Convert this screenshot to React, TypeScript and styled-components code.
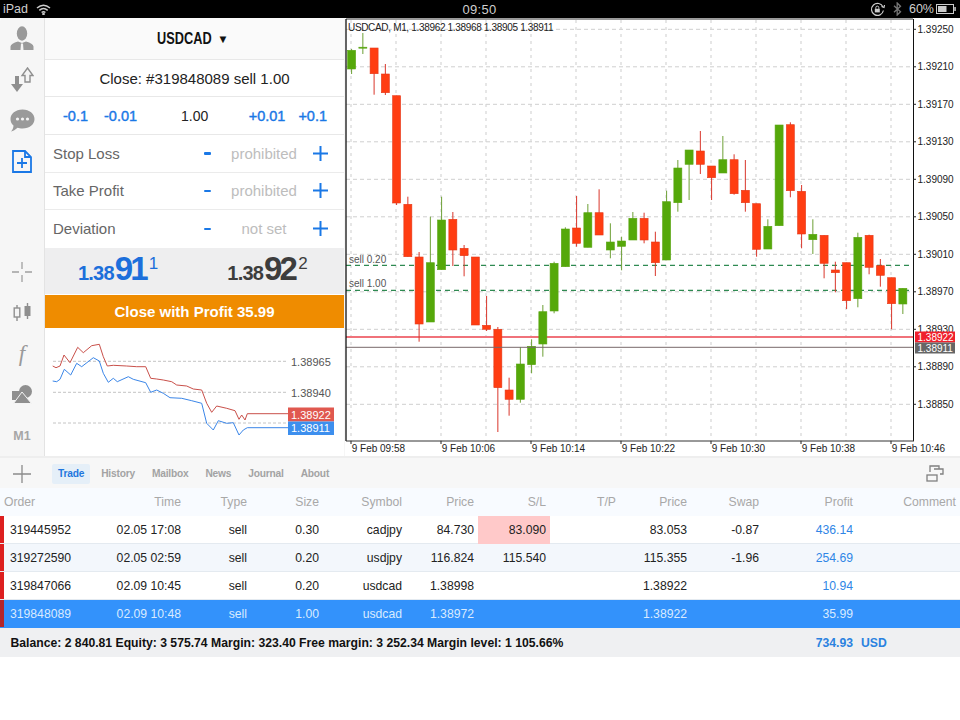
import React from 'react';
import styled, { createGlobalStyle } from 'styled-components';

const GlobalStyle = createGlobalStyle`
  html, body {
    margin: 0;
    padding: 0;
    background: #fff;
    font-family: "Liberation Sans", Arial, sans-serif;
  }
  * { box-sizing: border-box; }
`;

// [wickTop, bodyTop, bodyBottom, wickBottom, up]
const candles: [number, number, number, number, boolean][] = [
  [49, 50.3, 69, 74, true], [33, 47.2, 48.2, 54, true], [48, 48, 73.7, 94.7, false], [64, 74, 92.7, 95, false],
  [95.7, 95.7, 203, 205, false], [196.7, 204.3, 256.7, 256.7, false], [252, 257, 324, 341.7, false], [216.7, 262.7, 322, 322, true],
  [196.7, 220, 269.7, 269.7, true], [212, 219.3, 250, 266, false], [245, 248.3, 255.7, 276.3, false], [257, 257, 325, 325, false],
  [296, 325.3, 329.3, 331, false], [327, 329.3, 387.7, 432, false], [377.7, 390, 399.3, 415.7, false], [347, 364, 399.3, 402.7, true],
  [339.3, 346.3, 364.7, 373.3, true], [305, 311.7, 344, 356.7, true], [261.7, 263.3, 311, 313.3, true], [227.3, 229, 266.7, 266.7, true],
  [196, 228, 243.3, 246.7, false], [204, 212.7, 247.3, 247.3, true], [189.3, 212.7, 235, 235, false], [223.3, 242, 250, 258.3, true],
  [236.7, 241, 246.3, 270.3, true], [212, 218.3, 240, 240, true], [212.7, 218.3, 240, 243.3, false], [231.7, 242, 262.7, 276, false],
  [190.7, 201.7, 260, 260, true], [160, 168, 202.7, 211.7, true], [150, 150, 164.3, 200, true], [131, 151, 164.3, 174, false],
  [166, 166, 177.7, 200, false], [136, 159.7, 173, 173, true], [154.3, 159.7, 193.7, 194.7, false], [160, 190.3, 202.7, 211.7, false],
  [203.7, 203.7, 249.3, 256.7, false], [219.3, 226.3, 249, 249, true], [125, 125, 225.7, 225.7, true], [122.3, 124.7, 190.7, 197.3, false],
  [185, 191.3, 234, 248.3, false], [219.3, 234.3, 239.7, 254, true], [235.3, 235.3, 263.3, 278.3, false], [261.7, 270, 272.7, 292.3, false],
  [262.7, 262.7, 300.7, 309, false], [232.7, 237.3, 298.7, 307.3, true], [234.7, 235.3, 267.3, 274.3, false], [259, 265.7, 275.3, 286.7, false],
  [277.7, 277.7, 303.7, 329.3, false], [288.3, 288.3, 304, 314, true],
];

const priceLabels = ['1.39250', '1.39210', '1.39170', '1.39130', '1.39090', '1.39050', '1.39010', '1.38970', '1.38930', '1.38890', '1.38850'];
const timeLabels = ['9 Feb 09:58', '9 Feb 10:06', '9 Feb 10:14', '9 Feb 10:22', '9 Feb 10:30', '9 Feb 10:38', '9 Feb 10:46'];

const askLine = [[158,408],[168,413],[180,408],[192,375],[210,398],[233,352],[250,368],[275,347],[298,343],[310,380],[322,408],[340,406],[380,408],[410,410],[437,410],[452,445],[470,447],[490,450],[515,455],[530,465],[560,468],[580,477],[605,480],[620,520],[635,547],[650,528],[680,535],[705,542],[717,568],[725,555],[735,570],[742,551],[865,551]];
const bidLine = [[158,453],[170,455],[180,448],[193,418],[212,435],[230,400],[245,410],[280,383],[298,393],[310,430],[325,457],[340,445],[352,455],[385,440],[400,448],[437,458],[452,487],[470,480],[490,490],[510,503],[545,505],[575,512],[605,520],[620,580],[640,600],[655,572],[680,580],[700,578],[717,615],[730,600],[742,593],[865,593]];
const toPoints = (line: number[][]) => line.map(([x, y]) => `${(x / 3).toFixed(1)},${(230 + y / 3).toFixed(1)}`).join(' ');

const columns = [
  { name: 'Order', left: true }, { name: 'Time' }, { name: 'Type' }, { name: 'Size' }, { name: 'Symbol' }, { name: 'Price' },
  { name: 'S/L' }, { name: 'T/P' }, { name: 'Price' }, { name: 'Swap' }, { name: 'Profit' }, { name: 'Comment' },
];

const orders = [
  ['319445952', '02.05 17:08', 'sell', '0.30', 'cadjpy', '84.730', '83.090', '', '83.053', '-0.87', '436.14', ''],
  ['319272590', '02.05 02:59', 'sell', '0.20', 'usdjpy', '116.824', '115.540', '', '115.355', '-1.96', '254.69', ''],
  ['319847066', '02.09 10:45', 'sell', '0.20', 'usdcad', '1.38998', '', '', '1.38922', '', '10.94', ''],
  ['319848089', '02.09 10:48', 'sell', '1.00', 'usdcad', '1.38972', '', '', '1.38922', '', '35.99', ''],
];

const tabs = ['Trade', 'History', 'Mailbox', 'News', 'Journal', 'About'];

export default function App() {
  return (
    <Screen>
      <GlobalStyle />
      <StatusBar>
        <StatusGroup>
          <span>iPad</span>
          <svg width="15" height="11" viewBox="0 0 15 11" fill="none" stroke="#ccc" strokeWidth="1.5">
            <path d="M1 4 Q7.5 -1.5 14 4" />
            <path d="M3.3 6.3 Q7.5 2.8 11.7 6.3" />
            <path d="M5.6 8.5 Q7.5 7 9.4 8.5" />
            <circle cx="7.5" cy="10" r=".6" fill="#ccc" />
          </svg>
        </StatusGroup>
        <Clock>09:50</Clock>
        <StatusGroup>
          <svg width="15" height="15" viewBox="0 0 15 15" fill="none" stroke="#ccc" strokeWidth="1.2">
            <path d="M13 5 A6 6 0 1 0 13.4 8.5" />
            <path d="M11.5 4.5 L14 5.5 L14.5 3" />
            <rect x="4.8" y="6.8" width="5" height="3.6" fill="#ccc" stroke="none" />
            <path d="M5.8 6.8 V5.6 A1.5 1.5 0 0 1 8.8 5.6 V6.8" strokeWidth="1" />
          </svg>
          <BluetoothIcon width="9" height="14" viewBox="0 0 9 14" fill="none" stroke="#777" strokeWidth="1.3">
            <path d="M1 3.8 L7.5 9.8 L4.2 13 V1 L7.5 4.2 L1 10.2" />
          </BluetoothIcon>
          <span>60%</span>
          <BatteryIcon width="20" height="10" viewBox="0 0 20 10" fill="none">
            <rect x=".5" y=".5" width="17" height="9" stroke="#ccc" />
            <rect x="2" y="2" width="8.5" height="6" fill="#ccc" />
            <rect x="18.3" y="3" width="1.5" height="4" fill="#ccc" />
          </BatteryIcon>
        </StatusGroup>
      </StatusBar>

      <Main>
        <Rail>
          <RailGroup>
            <RailItem>
              <svg width="24" height="25" viewBox="0 0 24 25">
                <ellipse cx="12" cy="7.5" rx="5.2" ry="7.2" fill="#9a9a9a" />
                <path d="M0.5 24 V20.5 Q1 17.5 8 15.5 L12 17 L16 15.5 Q23 17.5 23.5 20.5 V24 Z" fill="#9a9a9a" />
                <path d="M11 17.5 H13 L13.5 24 H10.5 Z" fill="#f4f4f4" />
              </svg>
            </RailItem>
            <RailItem>
              <svg width="24" height="26" viewBox="0 0 24 26">
                <path d="M5 9 H9 V17 H13 L7 25 L1 17 H5 Z" fill="#8f8f8f" />
                <path d="M17.5 1 L23 8.5 H20 V15 H15 V8.5 H12 Z" fill="#f4f4f4" stroke="#8f8f8f" strokeWidth="1.4" />
              </svg>
            </RailItem>
            <RailItem>
              <svg width="25" height="23" viewBox="0 0 25 23">
                <path d="M12.5 0.5 C19.5 .5 24.5 4.8 24.5 10 C24.5 15.5 19.5 19.5 12.5 19.5 C10.5 19.5 9 19.3 7.5 18.8 C5.5 20.8 3.2 22 1 22.5 C2.6 20.8 3.4 18.8 3.5 16.5 C1.5 15 .5 12.8 .5 10 C.5 4.8 5.5 .5 12.5 .5 Z" fill="#9a9a9a" />
                <circle cx="7.5" cy="10" r="1.6" fill="#f4f4f4" />
                <circle cx="12.5" cy="10" r="1.6" fill="#f4f4f4" />
                <circle cx="17.5" cy="10" r="1.6" fill="#f4f4f4" />
              </svg>
            </RailItem>
            <RailItem>
              <svg width="20" height="23" viewBox="0 0 20 23" fill="none" stroke="#1a78e6" strokeWidth="1.8">
                <path d="M1 1 H13 L19 7 V22 H1 Z" />
                <path d="M13 1 V7 H19" />
                <path d="M10 8 V18 M5 13 H15" />
              </svg>
            </RailItem>
          </RailGroup>
          <RailGroup>
            <RailItem>
              <svg width="20" height="20" viewBox="0 0 20 20" stroke="#a0a0a0" strokeWidth="1.3">
                <path d="M10 0 V7 M10 13 V20 M0 10 H7 M13 10 H20" />
              </svg>
            </RailItem>
            <RailItem>
              <svg width="19" height="19" viewBox="0 0 19 19">
                <path d="M4 2 V18 M14.5 0 V16" stroke="#8f8f8f" strokeWidth="1.4" />
                <rect x="1.2" y="5" width="5.6" height="9" fill="#f4f4f4" stroke="#8f8f8f" strokeWidth="1.4" />
                <rect x="11.5" y="3" width="6" height="10" fill="#8f8f8f" />
              </svg>
            </RailItem>
            <RailItem><FunctionGlyph>f</FunctionGlyph></RailItem>
            <RailItem>
              <svg width="20" height="19" viewBox="0 0 20 19" fill="#8f8f8f">
                <circle cx="13.5" cy="6.5" r="6.5" />
                <rect x="0" y="6" width="9" height="9" />
                <path d="M10 7 L19.5 18.5 H1.5 Z" stroke="#f4f4f4" strokeWidth="1" />
              </svg>
            </RailItem>
            <RailItem><TimeframeLabel>M1</TimeframeLabel></RailItem>
          </RailGroup>
        </Rail>

        <Panel>
          <SymbolRow><SymbolName>USDCAD</SymbolName><Caret>▼</Caret></SymbolRow>
          <CloseRow>Close: #319848089 sell 1.00</CloseRow>
          <LotRow>
            <LotGroup $gap={16}><LotStep>-0.1</LotStep><LotStep>-0.01</LotStep></LotGroup>
            <LotValue>1.00</LotValue>
            <LotGroup $gap={13}><LotStep>+0.01</LotStep><LotStep>+0.1</LotStep></LotGroup>
          </LotRow>
          {[['Stop Loss', 'prohibited'], ['Take Profit', 'prohibited'], ['Deviation', 'not set']].map(([label, value]) => (
            <LevelRow key={label}>
              <LevelLabel>{label}</LevelLabel>
              <MinusMark />
              <LevelValue>{value}</LevelValue>
              <svg width="15" height="15" viewBox="0 0 15 15" stroke="#1a78e6" strokeWidth="2">
                <path d="M7.5 0 V15 M0 7.5 H15" />
              </svg>
            </LevelRow>
          ))}
          <QuoteRow>
            <Quote $color="#1c6fdb"><QuoteHead>1.38</QuoteHead><QuoteBig>91</QuoteBig><QuoteTail>1</QuoteTail></Quote>
            <Quote $color="#3d3d3d"><QuoteHead>1.38</QuoteHead><QuoteBig>92</QuoteBig><QuoteTail>2</QuoteTail></Quote>
          </QuoteRow>
          <CloseButton>Close with Profit 35.99</CloseButton>
          <MiniChart viewBox="45 328 299 127" width="299" height="127">
            {[361.3, 392.3, 423].map((y) => (
              <line key={y} x1="53" x2="287" y1={y} y2={y} stroke="#c4c4c4" strokeDasharray="3 2" />
            ))}
            <polyline points={toPoints(askLine)} fill="none" stroke="#c9504a" strokeWidth="1" />
            <polyline points={toPoints(bidLine)} fill="none" stroke="#3b86e8" strokeWidth="1" />
            <MiniLabel x="291" y="365.5" fill="#555">1.38965</MiniLabel>
            <MiniLabel x="291" y="396.5" fill="#555">1.38940</MiniLabel>
            <rect x="288" y="407.5" width="46" height="14" fill="#e0584f" />
            <rect x="288" y="421.5" width="46" height="13.5" fill="#3d8fee" />
            <MiniLabel x="291" y="418.5" fill="#fff">1.38922</MiniLabel>
            <MiniLabel x="291" y="432" fill="#fff">1.38911</MiniLabel>
          </MiniChart>
        </Panel>

        <ChartPane>
          <ChartSvg viewBox="345 18 615 438" width="615" height="438">
            {priceLabels.map((_, i) => {
              const y = 29.3 + i * 37.5;
              return <line key={i} x1="346" x2="913" y1={y} y2={y} stroke="#cfcfcf" strokeDasharray="4 3" />;
            })}
            {Array.from({ length: 13 }, (_, i) => 351 + i * 45).map((x) => (
              <line key={x} x1={x} x2={x} y1="20" y2="441" stroke="#d6d6d6" strokeWidth="1.2" strokeDasharray="3 4" />
            ))}

            <line x1="346" x2="913" y1="265.3" y2="265.3" stroke="#2f8a52" strokeWidth="1.2" strokeDasharray="5 4" />
            <line x1="346" x2="913" y1="290.3" y2="290.3" stroke="#2f8a52" strokeWidth="1.2" strokeDasharray="5 4" />
            <line x1="346" x2="913" y1="337" y2="337" stroke="#f0727a" strokeWidth="1.8" />

            {candles.map(([wickTop, top, bottom, wickBottom, up], i) => {
              const x = 351.6 + i * 11.25;
              const wick = up ? '#6d9f35' : '#d9362b';
              const fill = up ? '#55a80a' : '#ff3d12';
              return (
                <g key={i}>
                  <line x1={x} x2={x} y1={wickTop} y2={wickBottom} stroke={wick} />
                  <rect x={x - 4} y={top} width="8" height={bottom - top} fill={fill} stroke={up ? '#5aa512' : '#e5391a'} strokeWidth=".6" />
                </g>
              );
            })}

            <line x1="346" x2="913" y1="347.3" y2="347.3" stroke="#77686a" />
            <line x1="346" x2="913" y1="19" y2="19" stroke="#777" strokeWidth="1.5" />
            <line x1="346" x2="346" y1="19" y2="441" stroke="#111" strokeWidth="1.3" />
            <line x1="913.5" x2="913.5" y1="19" y2="441" stroke="#111" />
            <line x1="346" x2="914" y1="441" y2="441" stroke="#333" />

            <ChartTitle x="348" y="31">USDCAD, M1, 1.38962 1.38968 1.38905 1.38911</ChartTitle>
            <ChartText x="349" y="262.5" fill="#555">sell 0.20</ChartText>
            <ChartText x="349" y="287" fill="#555">sell 1.00</ChartText>

            {priceLabels.map((label, i) => {
              const y = 29.3 + i * 37.5;
              return (
                <g key={label}>
                  <line x1="913" x2="916" y1={y} y2={y} stroke="#222" />
                  <ChartText x="917.5" y={y + 3.5}>{label}</ChartText>
                </g>
              );
            })}
            {timeLabels.map((label, i) => {
              const x = 351 + i * 90;
              return (
                <g key={label}>
                  <line x1={x} x2={x} y1="441" y2="444" stroke="#222" />
                  <ChartText x={x + 0.7} y="452">{label}</ChartText>
                </g>
              );
            })}

            <rect x="915" y="331.5" width="40" height="11" fill="#f0202c" />
            <rect x="915" y="342.5" width="40" height="11" fill="#666" />
            <ChartText x="917.5" y="340.8" fill="#fff">1.38922</ChartText>
            <ChartText x="917.5" y="351.8" fill="#fff">1.38911</ChartText>
          </ChartSvg>
        </ChartPane>
      </Main>

      <TabBar>
        <svg width="18" height="18" viewBox="0 0 18 18" stroke="#8c8c8c" strokeWidth="1.3">
          <path d="M9 0 V18 M0 9 H18" />
        </svg>
        <Tabs>
          {tabs.map((tab, i) => <Tab key={tab} $active={i === 0}>{tab}</Tab>)}
        </Tabs>
        <svg width="18" height="17" viewBox="0 0 18 17" fill="none" stroke="#808080" strokeWidth="1.3">
          <path d="M4 7 V1 H13 V4 M8 4 H17 V9 H14" />
          <rect x="1" y="10" width="10" height="6" />
        </svg>
      </TabBar>

      <HeaderRow>
        {columns.map((col, i) => <HeaderCell key={i} $left={col.left}>{col.name}</HeaderCell>)}
      </HeaderRow>

      {orders.map((order, r) => (
        <OrderRow key={order[0]} $striped={r === 1} $selected={r === 3}>
          {order.map((value, c) => (
            <OrderCell key={c} $first={c === 0} $stopHit={r === 0 && c === 6} $profit={c === 10 && r !== 3}>
              {value}
            </OrderCell>
          ))}
        </OrderRow>
      ))}

      <Summary>
        <SummaryText>Balance: 2 840.81 Equity: 3 575.74 Margin: 323.40 Free margin: 3 252.34 Margin level: 1 105.66%</SummaryText>
        <SummaryTotal>734.93</SummaryTotal>
        <SummaryCurrency>USD</SummaryCurrency>
      </Summary>
    </Screen>
  );
}

const Screen = styled.div`
  width: 960px;
  height: 720px;
  overflow: hidden;
  background: #fff;
`;

const StatusBar = styled.div`
  height: 18px;
  background: #000;
  color: #cfcfcf;
  font-size: 12.5px;
  display: grid;
  grid-template-columns: 1fr auto 1fr;
  align-items: center;
  padding: 0 4px 0 3px;

  & > div:last-child { justify-content: flex-end; }
`;

const StatusGroup = styled.div`
  display: flex;
  align-items: center;
  gap: 8px;
`;

const BluetoothIcon = styled.svg`
  margin-right: -1px;
`;

const BatteryIcon = styled.svg`
  margin-left: -6px;
`;

const Clock = styled.div`
  font-size: 13px;
  letter-spacing: 0.3px;
`;

const Main = styled.div`
  display: flex;
  height: 438px;
  background: #f6f6f6;
  border-radius: 4px 4px 0 0;
  overflow: hidden;
`;

const Rail = styled.div`
  width: 45px;
  flex: none;
  background: #f6f6f6;
  border-right: 1px solid #e3e3e3;
  display: flex;
  flex-direction: column;
  justify-content: space-between;
`;

const RailGroup = styled.div`
  display: flex;
  flex-direction: column;
`;

const RailItem = styled.div`
  height: 41px;
  display: flex;
  align-items: center;
  justify-content: center;
`;

const FunctionGlyph = styled.span`
  font-family: "Liberation Serif", serif;
  font-style: italic;
  font-size: 23px;
  color: #9a9a9a;
`;

const TimeframeLabel = styled.span`
  font-size: 12.5px;
  font-weight: 700;
  color: #a6a6a6;
`;

const Panel = styled.div`
  width: 299px;
  flex: none;
  background: #fff;
  display: flex;
  flex-direction: column;
`;

const SymbolRow = styled.div`
  height: 42px;
  flex: none;
  background: #fafafa;
  border-bottom: 1px solid #e8e8e8;
  display: flex;
  align-items: center;
  justify-content: center;
  font-weight: 700;
  color: #111;
  padding: 1px 12px 0 0;
`;

const SymbolName = styled.span`
  display: inline-block;
  font-size: 17px;
  transform: scaleX(0.75);
`;

const Caret = styled.span`
  font-size: 11.5px;
  margin-left: -4px;
`;

const CloseRow = styled.div`
  height: 37px;
  flex: none;
  border-bottom: 1px solid #e8e8e8;
  display: flex;
  align-items: center;
  justify-content: center;
  font-size: 15px;
  color: #222;
`;

const LotRow = styled.div`
  height: 38px;
  flex: none;
  border-bottom: 1px solid #e8e8e8;
  display: flex;
  align-items: center;
  padding: 0 17px 0 18px;
`;

const LotGroup = styled.div<{ $gap: number }>`
  display: flex;
  gap: ${(p) => p.$gap}px;
`;

const LotStep = styled.span`
  font-size: 14.5px;
  color: #1a78e6;
  -webkit-text-stroke: 0.4px #1a78e6;
`;

const LotValue = styled.span`
  font-size: 14px;
  color: #222;
  margin: 0 auto 0 44px;
`;

const LevelRow = styled.div`
  height: 37.5px;
  flex: none;
  border-bottom: 1px solid #ebebeb;
  display: flex;
  align-items: center;
  padding: 0 16px 0 8px;

  &:nth-child(6) { border-bottom: none; }
`;

const LevelLabel = styled.span`
  flex: 1;
  font-size: 15px;
  color: #666;
`;

const MinusMark = styled.span`
  width: 7px;
  height: 2.5px;
  background: #1a78e6;
  border-radius: 1px;
`;

const LevelValue = styled.span`
  width: 102px;
  text-align: center;
  font-size: 15px;
  color: #bdbdbd;
  padding-left: 4px;
`;

const QuoteRow = styled.div`
  height: 46.5px;
  flex: none;
  background: #eeeeef;
  display: flex;
  align-items: flex-start;
  padding-left: 33px;
  gap: 69px;
`;

const Quote = styled.div<{ $color: string }>`
  position: relative;
  color: ${(p) => p.$color};
  font-weight: 700;
  display: flex;
  align-items: baseline;
  height: 40px;
  line-height: 40px;
  padding-top: 1px;
`;

const QuoteHead = styled.span`
  font-size: 20px;
  letter-spacing: -0.8px;
`;

const QuoteBig = styled.span`
  font-size: 33px;
  letter-spacing: -2.8px;
  margin-left: 1px;
`;

const QuoteTail = styled.span`
  font-size: 17px;
  font-weight: 400;
  margin-left: 3px;
  align-self: flex-start;
  line-height: 30px;
`;

const CloseButton = styled.div`
  height: 33px;
  flex: none;
  margin-top: 1px;
  background: #ef8c00;
  color: #fff;
  font-size: 15px;
  font-weight: 700;
  display: flex;
  align-items: center;
  justify-content: center;
`;

const MiniChart = styled.svg`
  display: block;
  flex: none;
`;

const MiniLabel = styled.text`
  font-size: 11px;
  font-family: "Liberation Sans", Arial, sans-serif;
`;

const ChartPane = styled.div`
  flex: 1;
  min-width: 0;
  margin-left: 1px;
  background: #fff;
`;

const ChartSvg = styled.svg`
  display: block;
`;

const ChartText = styled.text`
  font-size: 10px;
  font-family: "Liberation Sans", Arial, sans-serif;
  fill: ${(p) => p.fill || '#222'};
`;

const ChartTitle = styled(ChartText)`
  letter-spacing: -0.33px;
`;

const TabBar = styled.div`
  height: 32px;
  background: #f7f7f7;
  border-top: 2px solid #eeeeee;
  display: flex;
  align-items: center;
  padding: 1px 16px 0 13px;
`;

const Tabs = styled.div`
  flex: 1;
  display: flex;
  gap: 5px;
  margin-left: 21px;
`;

const Tab = styled.div<{ $active?: boolean }>`
  height: 20px;
  padding: 0 6px;
  border-radius: 2px;
  display: flex;
  align-items: center;
  font-size: 10.2px;
  font-weight: 700;
  letter-spacing: -0.2px;
  background: ${(p) => (p.$active ? '#e5eff8' : 'transparent')};
  color: ${(p) => (p.$active ? '#1f77de' : '#a3a3a3')};
`;

const tableColumns = '100px 85px 66px 72px 83px 72px 72px 70px 71px 72px 94px 103px';

const HeaderRow = styled.div`
  display: grid;
  grid-template-columns: ${tableColumns};
  height: 28px;
  align-items: center;
  background: #f8fbff;
`;

const HeaderCell = styled.div<{ $left?: boolean }>`
  font-size: 12.2px;
  color: #a8a8a8;
  text-align: ${(p) => (p.$left ? 'left' : 'right')};
  padding: ${(p) => (p.$left ? '0 0 0 4px' : '0 4px 0 0')};
`;

const OrderRow = styled.div<{ $striped?: boolean; $selected?: boolean }>`
  display: grid;
  grid-template-columns: ${tableColumns};
  height: 28px;
  position: relative;
  border-bottom: 1px solid ${(p) => (p.$selected ? '#3392fb' : '#e4eaf0')};
  background: ${(p) => (p.$selected ? '#3392fb' : p.$striped ? '#f3f7fc' : '#fff')};
  color: ${(p) => (p.$selected ? '#d9ebff' : '#222')};

  &::before {
    content: '';
    position: absolute;
    left: 0;
    top: 0;
    bottom: 0;
    width: 4px;
    background: ${(p) => (p.$selected ? '#b3262a' : '#dd1f1f')};
  }
`;

const OrderCell = styled.div<{ $first?: boolean; $stopHit?: boolean; $profit?: boolean }>`
  font-size: 12.2px;
  line-height: 28px;
  text-align: ${(p) => (p.$first ? 'left' : 'right')};
  padding: ${(p) => (p.$first ? '0 0 0 10px' : '0 4px 0 0')};
  background: ${(p) => (p.$stopHit ? '#ffc9c9' : 'transparent')};
  color: ${(p) => (p.$profit ? '#2f86e6' : 'inherit')};
`;

const Summary = styled.div`
  height: 29px;
  background: #eff0f2;
  display: flex;
  align-items: center;
  padding-left: 10.5px;
  font-size: 12.2px;
  font-weight: 700;
  color: #111;
`;

const SummaryText = styled.div`
  flex: 1;
`;

const SummaryTotal = styled.div`
  color: #2a82e0;
`;

const SummaryCurrency = styled.div`
  width: 107px;
  padding-left: 8px;
  color: #2a82e0;
`;
